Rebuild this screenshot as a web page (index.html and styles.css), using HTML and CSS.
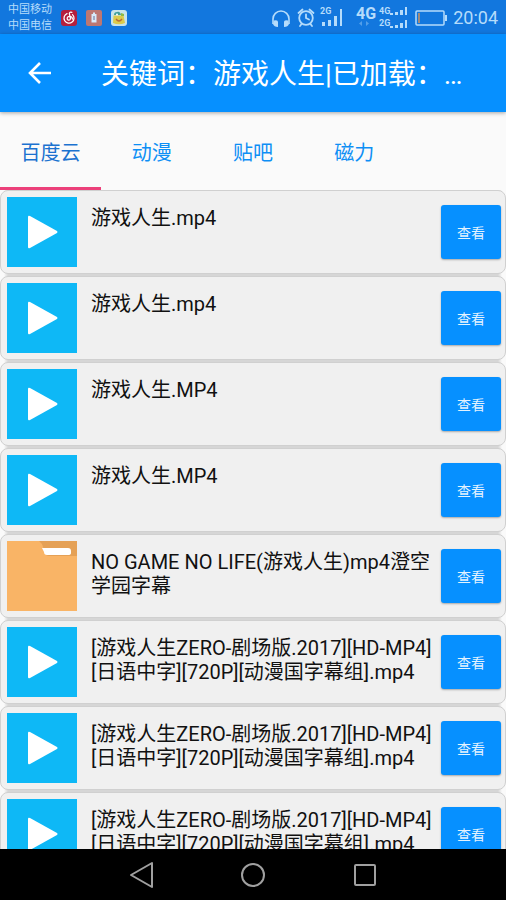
FILE: index.html
```html
<!DOCTYPE html>
<html lang="zh-CN">
<head>
<meta charset="utf-8">
<meta name="viewport" content="width=device-width, initial-scale=1">
<title>游戏人生</title>
<link rel="stylesheet" href="styles.css">
</head>
<body>
<svg class="defs" aria-hidden="true">
  <symbol id="video" viewBox="0 0 70 70">
    <rect width="70" height="70" fill="#0eb8f6"/>
    <path d="M21 20v30q0 2 2 1l27-15q1-1 0-2L23 19q-2-1-2 1z" fill="#fff"/>
  </symbol>
  <symbol id="folder" viewBox="0 0 70 70">
    <rect width="70" height="70" fill="#f9b466"/>
    <path d="M32 0h38v15H42q-3 0-4-3L36 6q-1-4-4-6z" fill="#e5a156"/>
    <path d="M35 7h26q3 0 3 3v2q0 2-3 2H40q-3 0-3-3z" fill="#fff"/>
  </symbol>
</svg>

<header class="status">
  <div class="carriers"><span>中国移动</span><span>中国电信</span></div>
  <div class="notices">
    <svg width="16" height="16" viewBox="0 0 16 16">
      <rect width="16" height="16" rx="3" fill="#b51f3d"/>
      <path d="M6 3.6a5 5 0 1 0 5.500 1M10.800 2.400c-2-.8-2.800.6-2.300 2l.9 3.800c.4 2.400-3.200 2.500-3.200.2 0-2.800 5.200-2.800 5.200.600" fill="none" stroke="#fff" stroke-width="1.300" stroke-linecap="round"/>
    </svg>
    <svg width="16" height="16" viewBox="0 0 16 16">
      <rect width="16" height="16" rx="2" fill="#bd7772"/>
      <path d="M7 2.500h2V4h1.500v8.500h-5V4H7z" fill="#d8eafa"/>
      <path d="M8 6v4" stroke="#8a8fae" stroke-width="1.400"/>
    </svg>
    <svg width="16" height="16" viewBox="0 0 16 16">
      <rect width="16" height="16" rx="3" fill="#c8e4ea"/>
      <path d="M2.500 5.500h10L14 13q-6 2.500-12 0z" fill="#dccb4c"/>
      <path d="M3 5q0-3 3-3 3-1 4 3z" fill="#3f9f9b"/>
      <path d="M10 3l3 1v2h-3z" fill="#8dba45"/>
      <path d="M5 9q3 4 6 0" fill="none" stroke="#b76b35" stroke-width="1.300"/>
      <circle cx="6" cy="4.500" r="1" fill="#fff"/>
    </svg>
  </div>
  <div class="system">
    <svg width="138" height="28" viewBox="0 0 138 28" fill="#b5dcfb" role="img" aria-label="信号与电量">
      <path d="M2 20v-5a8 8 0 0 1 16 0v5" fill="none" stroke="#b5dcfb" stroke-width="1.600"/>
      <path d="M3 16.500q4-1 4 1.500v5q-4 0-5-3zM17 16.500q-4-1-4 1.500v5q4 0 5-3z"/>
      <g fill="none" stroke="#b5dcfb" stroke-width="1.800" stroke-linecap="round">
        <circle cx="35" cy="14" r="6.800"/><path d="M35 10.500V14l3 1.500M27.500 9l4-3.500M42.500 9l-4-3.500M30.500 20l-1.500 2M39.500 20l1.500 2"/>
      </g>
      <text class="net-small" x="49" y="10">2G</text>
      <path d="M51 18h3v4h-3zM57 16h3v6h-3zM63 12h3v10h-3zM69 5h2v17h-2z"/>
      <text class="net-large" x="85" y="15">4G</text>
      <path d="M91 17v5l-3-2.500zM95 17v5l3-2.500z" fill="#539fe9"/>
      <text class="net-small" x="108" y="10">4G</text>
      <text class="net-small" x="108" y="22">2G</text>
      <path d="M119 9h3v2h-3zM124 8h3v3h-3zM129 6h3v5h-3zM134 3h2v8h-2zM119 22h3v2h-3zM124 21h3v3h-3zM129 19h3v5h-3zM134 16h2v8h-2z"/>
    </svg>
    <svg width="32" height="16" viewBox="0 0 32 16" aria-hidden="true">
      <rect x="1" y="1" width="28" height="14" rx="1" fill="none" stroke="#b5dcfb" stroke-width="1.500"/>
      <path d="M30 5h2v6h-2z" fill="#b5dcfb"/><path d="M3 3h2v10H3z" fill="#a38a78"/>
    </svg>
    <time>20:04</time>
  </div>
</header>

<div class="appbar">
  <button class="back" type="button" aria-label="返回">
    <svg width="24" height="24" viewBox="0 0 24 24" fill="none" stroke="#fff" stroke-width="2.600"><path d="M24 12H4M13 2L3 12l10 10"/></svg>
  </button>
  <h1>关键词：游戏人生|已加载：100条</h1>
</div>

<nav class="tabs">
  <a class="tab active" href="#baidu">百度云</a>
  <a class="tab" href="#anime">动漫</a>
  <a class="tab" href="#tieba">贴吧</a>
  <a class="tab" href="#magnet">磁力</a>
</nav>

<main class="results">
  <ul>
    <li class="item"><svg class="thumb"><use href="#video"/></svg><p>游戏人生.mp4</p><button class="view" type="button">查看</button></li>
    <li class="item"><svg class="thumb"><use href="#video"/></svg><p>游戏人生.mp4</p><button class="view" type="button">查看</button></li>
    <li class="item"><svg class="thumb"><use href="#video"/></svg><p>游戏人生.MP4</p><button class="view" type="button">查看</button></li>
    <li class="item"><svg class="thumb"><use href="#video"/></svg><p>游戏人生.MP4</p><button class="view" type="button">查看</button></li>
    <li class="item"><svg class="thumb"><use href="#folder"/></svg><p>NO GAME NO LIFE(游戏人生)mp4澄空学园字幕</p><button class="view" type="button">查看</button></li>
    <li class="item"><svg class="thumb"><use href="#video"/></svg><p>[游戏人生ZERO-剧场版.2017][HD-MP4][日语中字][720P][动漫国字幕组].mp4</p><button class="view" type="button">查看</button></li>
    <li class="item"><svg class="thumb"><use href="#video"/></svg><p>[游戏人生ZERO-剧场版.2017][HD-MP4][日语中字][720P][动漫国字幕组].mp4</p><button class="view" type="button">查看</button></li>
    <li class="item"><svg class="thumb"><use href="#video"/></svg><p>[游戏人生ZERO-剧场版.2017][HD-MP4][日语中字][720P][动漫国字幕组].mp4</p><button class="view" type="button">查看</button></li>
  </ul>
</main>

<footer class="navbar">
  <button type="button" aria-label="后退"><svg width="26" height="28" viewBox="0 0 26 28"><path d="M24 2v24L3 14z"/></svg></button>
  <button type="button" aria-label="主屏幕"><svg width="26" height="28" viewBox="0 0 26 28"><circle cx="13" cy="14" r="11"/></svg></button>
  <button type="button" aria-label="最近任务"><svg width="26" height="28" viewBox="0 0 26 28"><rect x="3" y="4" width="20" height="20" rx="1"/></svg></button>
</footer>
</body>
</html>
```
FILE: styles.css
```css
* {
  box-sizing: border-box;
}

body {
  margin: 0;
  height: 100vh;
  display: flex;
  flex-direction: column;
  overflow: hidden;
  background: #fafafa;
  color: #111;
  font-family: Roboto, "Noto Sans CJK SC", sans-serif;
}

button {
  padding: 0;
  border: 0;
  background: none;
  font-family: inherit;
}

svg {
  display: block;
  flex: none;
}

.defs {
  position: absolute;
  width: 0;
  height: 0;
}

.status {
  flex: none;
  display: flex;
  align-items: center;
  height: 34px;
  padding: 1px 8px 0;
  background: #1277de;
  color: #b5dcfb;
}

.carriers {
  display: flex;
  flex-direction: column;
  font-size: 11px;
  line-height: 16px;
}

.notices {
  display: flex;
  gap: 9px;
  margin-left: 9px;
}

.system {
  display: flex;
  align-items: center;
  gap: 6px;
  margin-left: auto;
  font-size: 18px;
}

.net-small {
  font-size: 9px;
  font-weight: 700;
}

.net-large {
  font-size: 16px;
  font-weight: 700;
}

.appbar {
  flex: none;
  display: flex;
  align-items: center;
  height: 78px;
  padding: 0 40px 0 27px;
  background: #0690ff;
  color: #fff;
  box-shadow: 0 1px 4px rgba(0, 0, 0, 0.35);
  z-index: 1;
}

.back {
  flex: none;
  margin-right: 50px;
}

.appbar h1 {
  flex: 1;
  min-width: 0;
  margin: 0;
  padding-top: 4px;
  overflow: hidden;
  text-overflow: ellipsis;
  white-space: nowrap;
  font-size: 28px;
  font-weight: 400;
  line-height: 40px;
}

.tabs {
  flex: none;
  display: grid;
  grid-template-columns: repeat(5, 1fr);
  height: 78px;
}

.tab {
  display: flex;
  align-items: center;
  justify-content: center;
  padding-top: 3px;
  border-bottom: 3px solid transparent;
  color: #0d8ff5;
  font-size: 20px;
  text-decoration: none;
}

.tab.active {
  border-color: #ec407a;
  color: #1b72d0;
}

.results {
  flex: 1;
  min-height: 0;
  overflow: hidden;
}

.results ul {
  display: flex;
  flex-direction: column;
  gap: 2px;
  margin: 0;
  padding: 0;
  list-style: none;
  background: linear-gradient(90deg, #fafafa 4px, #d6d6d6 8px, #d6d6d6 calc(100% - 8px), #fafafa calc(100% - 4px));
}

.item {
  display: flex;
  align-items: center;
  height: 84px;
  padding: 0 4px 0 6px;
  border: 1px solid #d0d0d0;
  border-radius: 8px;
  background: #f0f0f0;
}

.thumb {
  width: 70px;
  height: 70px;
}

.item p {
  flex: 1;
  align-self: flex-start;
  margin: 15px 0 0 14px;
  font-size: 20px;
  line-height: 24px;
  word-break: break-all;
}

.view {
  flex: none;
  width: 60px;
  height: 54px;
  margin-left: 8px;
  border-radius: 3px;
  background: #0690ff;
  box-shadow: 0 1px 2px rgba(0, 0, 0, 0.3);
  color: #e3f3ff;
  font-size: 14px;
}

.navbar {
  flex: none;
  display: flex;
  align-items: center;
  justify-content: center;
  gap: 86px;
  height: 51px;
  background: #000;
}

.navbar svg {
  fill: none;
  stroke: #a0a0a0;
  stroke-width: 2;
  stroke-linejoin: round;
}
```
